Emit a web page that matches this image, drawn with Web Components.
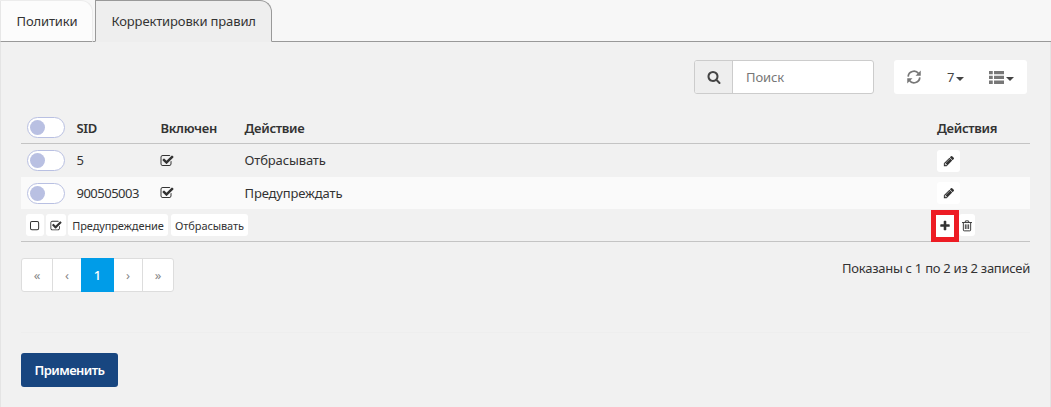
<!DOCTYPE html>
<html lang="ru"><head><meta charset="utf-8"><title>Корректировки правил</title>
<style>
html,body{margin:0;height:100%;overflow:hidden}
body{font:13px/20px "Noto Sans","Open Sans",sans-serif;letter-spacing:-.13px;color:#333;background:#f7f7f7}
</style></head><body><rules-page></rules-page>
<script>
const define=(name,html,init)=>customElements.define(name,class extends HTMLElement{
  constructor(){super();const t=document.createElement('template');t.innerHTML='<style>*{box-sizing:border-box}</style>'+html;
    this.attachShadow({mode:'open'}).append(t.content.cloneNode(true));}
  connectedCallback(){if(init)init(this,this.shadowRoot)}
});
const icons={
 search:'<path d="M1216 832q0-185-131.500-316.500t-316.500-131.500-316.500 131.500-131.500 316.500 131.500 316.500 316.500 131.500 316.500-131.500 131.500-316.500zm512 832q0 52-38 90t-90 38q-54 0-90-38l-343-342q-179 124-399 124-143 0-273.500-55.500t-225-150-150-225-55.500-273.500 55.500-273.500 150-225 225-150 273.500-55.500 273.500 55.500 225 150 150 225 55.500 273.500q0 220-124 399l343 343q37 37 37 90z"/>',
 refresh:'<g fill="none" stroke="currentColor" stroke-width="220"><path d="M150 850A740 740 0 0 1 1480 460M1642 942A740 740 0 0 1 312 1332"/></g><path d="M1760 60V730H1090zM32 1732V1062H702z"/>',
 list:'<path d="M0 120h450v400H0zM600 120h1192v400H600zM0 690h450v400H0zM600 690h1192v400H600zM0 1260h450v400H0zM600 1260h1192v400H600z"/>',
 check:'<path d="M1472 930v318q0 119-84.500 203.500t-203.500 84.500h-832q-119 0-203.500-84.500t-84.500-203.500v-832q0-119 84.500-203.500t203.500-84.500h832q63 0 117 25 15 7 18 23 3 17-9 29l-49 49q-10 10-23 10-3 0-9-2-23-6-45-6h-832q-66 0-113 47t-47 113v832q0 66 47 113t113 47h832q66 0 113-47t47-113v-254q0-13 9-22l64-64q10-10 23-10 6 0 12 3 20 8 20 29zm231-489l-814 814q-24 24-57 24t-57-24l-430-430q-24-24-24-57t24-57l110-110q24-24 57-24t57 24l263 263 647-647q24-24 57-24t57 24l110 110q24 24 24 57t-24 57z"/>',
 square:'<rect x="224" y="224" width="1216" height="1216" rx="210" fill="none" stroke="currentColor" stroke-width="150"/>',
 pencil:'<path d="M491 1536l91-91-235-235-91 91v107h128v128h107zm523-928q0-22-22-22-10 0-17 7l-542 542q-7 7-7 17 0 22 22 22 10 0 17-7l542-542q7-7 7-17zm-54-192l416 416-832 832h-416v-416zm683 96q0 53-37 90l-166 166-416-416 166-165q36-38 90-38 53 0 91 38l235 234q37 39 37 91z"/>',
 plus:'<path d="M1600 736v192q0 40-28 68t-68 28h-416v416q0 40-28 68t-68 28h-192q-40 0-68-28t-28-68v-416h-416q-40 0-68-28t-28-68v-192q0-40 28-68t68-28h416v-416q0-40 28-68t68-28h192q40 0 68 28t28 68v416h416q40 0 68 28t28 68z"/>',
 trash:'<g fill="none" stroke="currentColor" stroke-width="140"><path d="M150 380H1640M600 350L680 130H1110L1190 350M350 380V1500Q350 1620 470 1620H1320Q1440 1620 1440 1500V380M650 650V1350M895 650V1350M1140 650V1350"/></g>'
};
define('ui-icon','<style>:host{display:inline-block;width:14px;height:14px;flex:none}svg{display:block;width:100%;height:100%;fill:currentColor}</style><svg viewBox="0 0 1792 1792"></svg>',(h,r)=>r.querySelector('svg').innerHTML=icons[h.getAttribute('name')]);
define('tab-item',`<style>:host{display:flex;align-items:center;width:93px;height:42px;padding-left:15.500px;border:1px solid #ececec;border-bottom-color:#999;border-left-color:#e7e7e7;border-radius:0 12px 0 0;background:#fcfcfc;white-space:nowrap}
:host([active]){width:177px;border-color:#999;border-bottom-color:#eee;background:#eee}</style><slot></slot>`);
define('tab-bar','<style>:host{display:flex;gap:2px;height:42px;background:linear-gradient(#999,#999) 0 41px/100% 1px no-repeat #f7f7f7}</style><slot></slot>');
define('toggle-switch','<style>:host{display:flex;align-items:center;width:38px;height:21px;padding-left:2px;border:1px solid #b9c0e2;border-radius:11px;background:#fff}i{width:15px;height:15px;border-radius:50%;background:#b9c0e2}</style><i></i>');
define('drop-caret','<style>:host{display:block;border:4px solid transparent;border-top-color:#444;border-bottom:0;margin-top:3px}</style>');
define('search-box',`<style>:host{display:flex;width:180px;height:34px;border:1px solid #ccc;border-radius:3px;background:#fff;overflow:hidden;color:#777}
div{width:38px;border-right:1px solid #ccc;background:#eee;display:grid;place-items:center;color:#444}span{padding:6px 13px}</style><div><ui-icon name="search"></ui-icon></div><span><slot></slot></span>`);
define('tool-group',`<style>:host{display:flex;width:133px;height:34px;border-radius:3px;background:#fff;color:#444}
div{display:flex;align-items:center}.a{width:41px;padding-left:13px;color:#777}.b{width:42px;padding-left:12px;gap:2px}.c{padding-left:12px;gap:2px}.c ui-icon{color:#777;width:15px;height:15px;margin-top:1px}</style>
<div class="a"><ui-icon name="refresh"></ui-icon></div><div class="b"><span>7</span><drop-caret></drop-caret></div><div class="c"><ui-icon name="list"></ui-icon><drop-caret></drop-caret></div>`);
define('small-button',`<style>:host{display:flex;align-items:center;justify-content:center;height:22px;border-radius:3px;background:#fff;white-space:nowrap;font-size:11px}::slotted(ui-icon){width:12px;height:12px}</style><slot></slot>`);
define('rule-row',`<style>:host{display:grid;grid-template-columns:49.500px 84px 84px 692.500px 1fr;align-items:center;padding-left:6px;height:33px}
:host([head]){font-weight:600;letter-spacing:-.3px;height:33px;border-bottom:1px solid #c4c4c4}:host([head]) ::slotted(span){position:relative;top:1px}:host([stripe]){background:#fafafa;height:32px}</style><slot></slot>`);
define('new-rule',`<style>:host{display:flex;gap:2px;align-items:center;height:33px;border-bottom:1px solid #c4c4c4;padding-left:5px}.gap{flex:1}
.add{display:flex;width:28px;height:32px;border:5px solid #ed1c24;background:#fff;align-items:center;justify-content:center;margin-right:-2px;position:relative;top:1px}.del{margin-right:55px}ui-icon{width:12px;height:12px}small-button{height:22px;padding-top:1px;letter-spacing:-.1px}</style>
<small-button style="width:18px"><ui-icon name="square"></ui-icon></small-button><small-button style="width:20px"><ui-icon name="check"></ui-icon></small-button><small-button style="width:100px">Предупреждение</small-button><small-button style="width:77px;margin-left:1px">Отбрасывать</small-button><span class="gap"></span><div class="add"><ui-icon name="plus"></ui-icon></div><small-button class="del" style="width:16px"><ui-icon name="trash"></ui-icon></small-button>`);
define('page-nav',`<style>:host{display:flex;width:153px;height:34px;border:1px solid #ddd;border-radius:3px;background:#fff;color:#888}
span{display:grid;place-items:center;width:31px;border-right:1px solid #ddd}span:nth-of-type(2){width:28px;border:0}span:nth-of-type(4){width:29px}span:last-child{border:0;flex:1}.on{width:33px;margin:-1px 0;background:#009ce8;color:#fff;border:0;font-weight:500}</style><span>«</span><span>‹</span><span class="on">1</span><span>›</span><span>»</span>`);
define('primary-button','<style>:host{display:grid;place-items:center;width:97px;height:34px;border-radius:3px;background:#184680;color:#fff;font-weight:600;letter-spacing:-.55px}</style><slot></slot>');
define('rules-page',`<style>:host{display:flex;flex-direction:column;height:407px}
main{flex:1;border:1px solid #e4e4e4;border-width:0 1px;background:#f1f1f1;padding:18px 20px 0}
.tools{display:flex;gap:20px;justify-content:flex-end;padding-right:3px}.table{margin-top:17px}
.foot{display:flex;justify-content:space-between;margin-top:16px}.count{letter-spacing:-.27px}.sid{letter-spacing:-.5px}
.end{border-top:1px solid #eee;margin-top:40px;padding-top:20px}rule-row small-button{width:23px}rule-row ui-icon[name=check]{margin-left:-1px}.first span{padding-bottom:1px}</style>
<tab-bar><tab-item>Политики</tab-item><tab-item active>Корректировки правил</tab-item></tab-bar>
<main><div class="tools"><search-box>Поиск</search-box><tool-group></tool-group></div>
<div class="table"><rule-row head><toggle-switch></toggle-switch><span>SID</span><span>Включен</span><span>Действие</span><span>Действия</span></rule-row>
<rule-row class="first"><toggle-switch></toggle-switch><span class="sid">5</span><ui-icon name="check"></ui-icon><span>Отбрасывать</span><small-button><ui-icon name="pencil"></ui-icon></small-button></rule-row>
<rule-row stripe><toggle-switch></toggle-switch><span class="sid">900505003</span><ui-icon name="check"></ui-icon><span>Предупреждать</span><small-button><ui-icon name="pencil"></ui-icon></small-button></rule-row><new-rule></new-rule></div>
<div class="foot"><page-nav></page-nav><span class="count">Показаны с 1 по 2 из 2 записей</span></div>
<div class="end"><primary-button>Применить</primary-button></div></main>`);
</script></body></html>
